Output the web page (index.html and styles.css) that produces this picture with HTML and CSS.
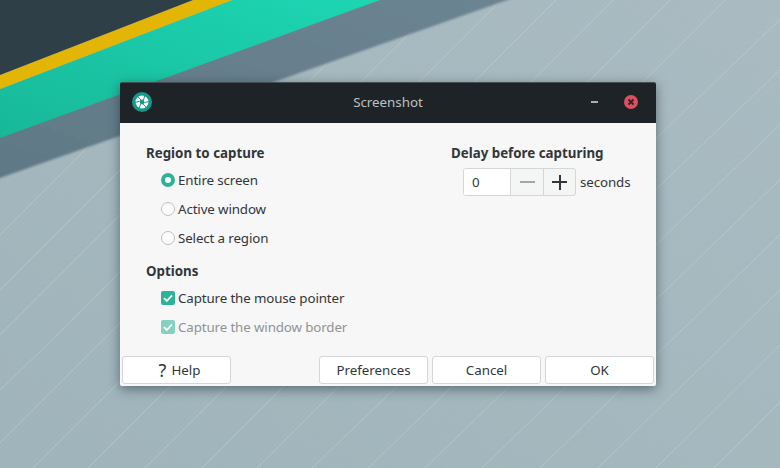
FILE: index.html
```html
<!DOCTYPE html>
<html lang="en">
<head>
    <meta charset="UTF-8">
    <meta name="viewport" content="width=device-width, initial-scale=1.0">
    <title>Screenshot</title>
    <link rel="stylesheet" href="styles.css">
</head>
<body>
    <div class="desktop">
        <svg class="wallpaper" width="780" height="468" viewBox="0 0 780 468">
            <defs>
                <linearGradient id="band" x1="0" y1="1" x2="1" y2="0">
                    <stop offset="0" stop-color="#5f7885"/>
                    <stop offset="1" stop-color="#6d8593"/>
                </linearGradient>
                <linearGradient id="teal" x1="0" y1="1" x2="1" y2="0">
                    <stop offset="0" stop-color="#17b899"/>
                    <stop offset="1" stop-color="#1dd6b3"/>
                </linearGradient>
                <linearGradient id="paper" x1="1" y1="0" x2="0" y2="1">
                    <stop offset="0" stop-color="#aabcc2"/>
                    <stop offset="1" stop-color="#a0b4bb"/>
                </linearGradient>
                <filter id="grain" x="0" y="0" width="100%" height="100%">
                    <feTurbulence type="fractalNoise" baseFrequency="0.05 0.35" numOctaves="3" seed="4"/>
                    <feColorMatrix values="0 0 0 0 0.35  0 0 0 0 0.45  0 0 0 0 0.5  0 0 0 0.5 -0.15"/>
                </filter>
                <filter id="soft">
                    <feGaussianBlur stdDeviation="0.8"/>
                </filter>
            </defs>
            <rect width="780" height="468" fill="url(#paper)"/>
            <rect width="780" height="468" filter="url(#grain)" opacity="0.35"/>
            <g class="scratches">
                <path d="M0 235L235 0"/>
                <path d="M0 290L290 0"/>
                <path d="M0 335L335 0"/>
                <path d="M0 390L52 340L390 0"/>
                <path d="M0 443L443 0"/>
                <path d="M33 468L501 0"/>
                <path d="M88 468L556 0"/>
                <path d="M145 468L613 0"/>
                <path d="M202 468L670 0"/>
                <path d="M257 468L725 0"/>
                <path d="M312 468L790 10"/>
                <path d="M368 468L790 60"/>
                <path d="M425 468L790 115"/>
                <path d="M482 468L790 170"/>
                <path d="M540 468L790 225"/>
                <path d="M598 468L790 280"/>
                <path d="M656 468L790 335"/>
                <path d="M714 468L790 392"/>
            </g>
            <polygon points="-20,137 377,-8 530,-8 -20,185" fill="url(#band)" filter="url(#soft)"/>
            <polygon points="0,89 232,0 380,0 0,138" fill="url(#teal)"/>
            <polygon points="0,75 193,0 232,0 0,89" fill="#e3b505"/>
            <polygon points="0,0 193,0 0,75" fill="#2f3f47"/>
        </svg>

        <div class="window">
            <div class="titlebar">
                <svg class="app-icon" width="20" height="20" viewBox="0 0 20 20">
                    <circle cx="10" cy="10" r="10" fill="#17998a"/>
                    <circle cx="10" cy="10" r="6.5" fill="#fff"/>
                    <circle cx="10" cy="10" r="2.4" fill="#17998a"/>
                    <g stroke="#17998a" stroke-width="1">
                        <path d="M11.5 8L13 3"/>
                        <path d="M12.4 10.6L17 9.5"/>
                        <path d="M11 12.1L14.5 15.5"/>
                        <path d="M8.6 12L7 17"/>
                        <path d="M7.6 9.4L3 10.5"/>
                        <path d="M9 7.9L5.5 4.5"/>
                    </g>
                </svg>
                <span class="title">Screenshot</span>
                <span class="minimize"></span>
                <svg class="close" width="16" height="16" viewBox="0 0 16 16">
                    <circle cx="8" cy="8" r="7" fill="#d9505f"/>
                    <path d="M5.5 5.5L10.5 10.5M10.5 5.5L5.5 10.5" stroke="#3a1f25" stroke-width="1.8"/>
                </svg>
            </div>

            <div class="content">
                <div class="columns">
                    <div class="left-col">
                        <h2 class="group-title">Region to capture</h2>
                        <div class="option"><span class="radio radio-on"></span>Entire screen</div>
                        <div class="option"><span class="radio"></span>Active window</div>
                        <div class="option"><span class="radio"></span>Select a region</div>

                        <h2 class="group-title options-title">Options</h2>
                        <div class="option">
                            <svg class="check" width="14" height="14" viewBox="0 0 14 14">
                                <rect width="14" height="14" rx="2" fill="#2eb398"/>
                                <path d="M3 7.2L5.8 10L11 4.4" fill="none" stroke="#fff" stroke-width="1.8"/>
                            </svg>
                            Capture the mouse pointer
                        </div>
                        <div class="option disabled">
                            <svg class="check" width="14" height="14" viewBox="0 0 14 14">
                                <rect width="14" height="14" rx="2" fill="#84d1c1"/>
                                <path d="M3 7.2L5.8 10L11 4.4" fill="none" stroke="#fff" stroke-width="1.8"/>
                            </svg>
                            Capture the window border
                        </div>
                    </div>

                    <div class="right-col">
                        <h2 class="group-title">Delay before capturing</h2>
                        <div class="delay-row">
                            <div class="spinbox">
                                <span class="spin-value">0</span>
                                <span class="spin-btn minus"><i></i></span>
                                <span class="spin-btn plus"><i></i><b></b></span>
                            </div>
                            <span class="spin-unit">seconds</span>
                        </div>
                    </div>
                </div>

                <div class="footer">
                    <button class="btn help-btn"><span class="help-mark">?</span>Help</button>
                    <div class="footer-right">
                        <button class="btn">Preferences</button>
                        <button class="btn">Cancel</button>
                        <button class="btn">OK</button>
                    </div>
                </div>
            </div>
        </div>
    </div>
</body>
</html>
```

FILE: styles.css
```css
*{
    margin: 0;
    padding: 0;
    box-sizing: border-box;
}
body{
    width: 780px;
    height: 468px;
    overflow: hidden;
    font-family: "Noto Sans", sans-serif;
    font-size: 13.33px;
    color: #31363b;
}
.desktop{
    position: relative;
    width: 780px;
    height: 468px;
    overflow: hidden;
}
.wallpaper{
    position: absolute;
    left: 0;
    top: 0;
}
.scratches path{
    fill: none;
    stroke: #c8d5d9;
    stroke-width: 1;
    opacity: 0.5;
}
.window{
    position: absolute;
    left: 120px;
    top: 82px;
    width: 536px;
    height: 304px;
    display: flex;
    flex-direction: column;
    border-radius: 2px;
    box-shadow: 0 3px 12px rgba(30, 45, 52, 0.55);
}
.titlebar{
    position: relative;
    height: 41px;
    background: #1e2327;
    border-top: 1px solid #474f53;
    display: flex;
    align-items: center;
    padding: 0 17px 2px 12px;
    border-radius: 2px 2px 0 0;
}
.title{
    position: absolute;
    left: 0;
    right: 0;
    text-align: center;
    color: #bdc1c3;
}
.minimize{
    width: 7px;
    height: 2px;
    background: #a9aeb0;
    margin-left: auto;
    margin-right: 25px;
}
.content{
    flex: 1;
    background: #f7f7f7;
    display: flex;
    flex-direction: column;
    justify-content: space-between;
    padding: 0 2px 2px;
    border-radius: 0 0 2px 2px;
}
.columns{
    display: flex;
    justify-content: space-between;
    padding: 20px 0 0 24px;
}
.group-title{
    font-size: 13.33px;
    font-weight: 700;
    line-height: 20px;
}
.options-title{
    margin-top: 9px;
}
.option{
    display: flex;
    align-items: center;
    gap: 3px;
    height: 29px;
    padding-left: 15px;
    letter-spacing: -0.12px;
}
.left-col .group-title + .option{
    margin-top: 2px;
}
.radio{
    width: 14px;
    height: 14px;
    border-radius: 50%;
    border: 1px solid #bdc0c2;
    background: #fcfcfc;
}
.radio-on{
    border: 4.5px solid #2eb398;
    background: #fff;
}
.check{
    flex: none;
}
.disabled{
    color: #8f9396;
}
.right-col{
    width: 203px;
}
.delay-row{
    display: flex;
    align-items: center;
    gap: 4px;
    margin-left: 12px;
    margin-top: 5px;
}
.spin-unit{
    letter-spacing: -0.1px;
}
.spinbox{
    display: flex;
    width: 113px;
    height: 28px;
    background: #f4f5f5;
    border: 1px solid #d4d6d7;
    border-radius: 3px;
}
.spin-value{
    width: 47px;
    line-height: 26px;
    padding-left: 8px;
    background: #fff;
    border-right: 1px solid #d4d6d7;
    border-radius: 2px 0 0 2px;
}
.spin-btn{
    position: relative;
    width: 32px;
    display: block;
}
.spin-btn.plus{
    flex: 1;
    border-left: 1px solid #d4d6d7;
}
.spin-btn i{
    position: absolute;
    left: 50%;
    top: 12px;
    width: 15px;
    height: 2px;
    margin-left: -7.5px;
    background: #31363b;
}
.spin-btn.minus i{
    background: #a4a7a9;
}
.spin-btn b{
    position: absolute;
    left: 50%;
    top: 5.5px;
    width: 2px;
    height: 15px;
    margin-left: -1px;
    background: #31363b;
}
.footer{
    display: flex;
    justify-content: space-between;
}
.footer-right{
    display: flex;
    gap: 4px;
}
.btn{
    width: 109px;
    height: 28px;
    background: #fff;
    border: 1px solid #d4d6d7;
    border-radius: 3px;
    font-family: inherit;
    font-size: 13.33px;
    color: #31363b;
}
.help-btn{
    display: flex;
    align-items: center;
    justify-content: center;
    gap: 5px;
    padding-left: 6px;
}
.help-mark{
    font-size: 18px;
    line-height: 20px;
}
```
